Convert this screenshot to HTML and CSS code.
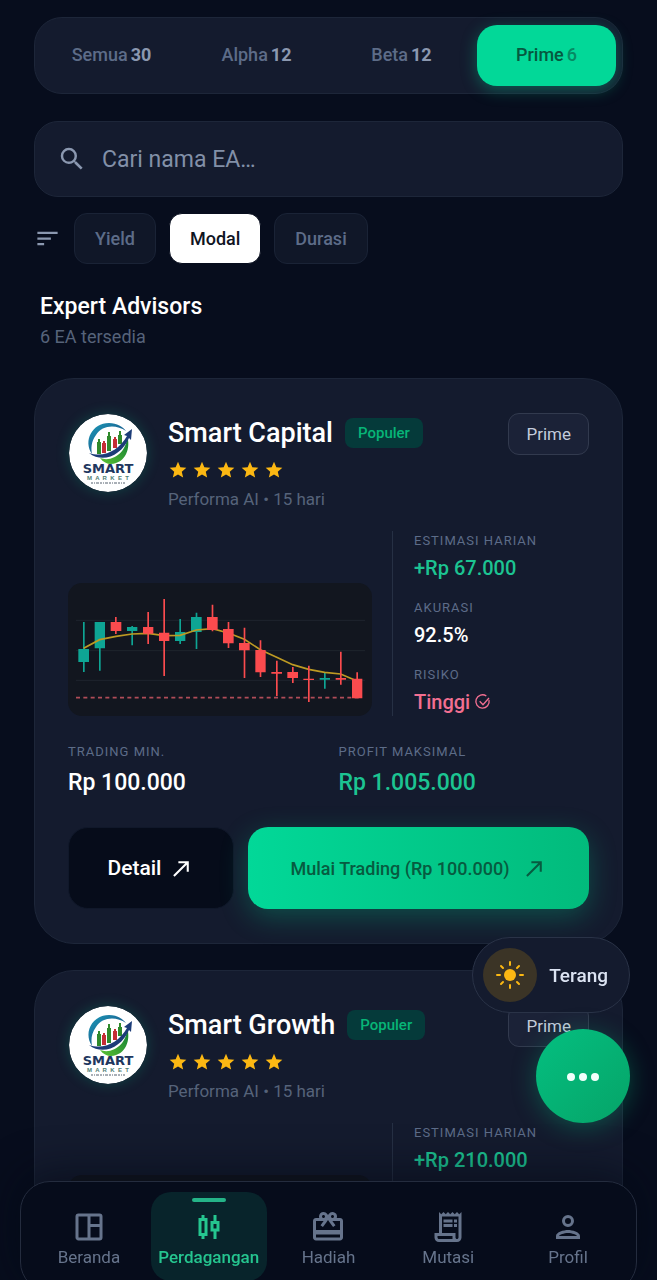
FILE: index.html
```html
<!DOCTYPE html>
<html lang="id">
<head>
  <meta charset="UTF-8">
  <meta name="viewport" content="width=device-width, initial-scale=1.0">
  <title>Expert Advisors</title>
  <link rel="stylesheet" href="styles.css">
</head>
<body>
  <!-- Shared drawings -->
  <svg class="defs" aria-hidden="true">
    <defs>
      <linearGradient id="ringBlue" x1="0" y1="0" x2="1" y2="1">
        <stop offset="0" stop-color="#1b9bb8"/>
        <stop offset="1" stop-color="#1c3c78"/>
      </linearGradient>
      <linearGradient id="ringGreen" x1="0" y1="1" x2="1" y2="0">
        <stop offset="0" stop-color="#5cc233"/>
        <stop offset="1" stop-color="#0d7a34"/>
      </linearGradient>
    </defs>
    <symbol id="star" viewBox="0 0 24 24">
      <path d="M12 17.27 18.18 21l-1.64-7.03L22 9.24l-7.19-.61L12 2 9.19 8.63 2 9.24l5.46 4.73L5.82 21z"/>
    </symbol>
    <symbol id="arrow" viewBox="0 0 24 24">
      <path d="M9 5v2h6.59L4 18.59 5.41 20 17 8.41V15h2V5H9z"/>
    </symbol>
  </svg>

  <main class="content">
    <div class="tabs">
      <button class="tab">Semua <b>30</b></button>
      <button class="tab">Alpha <b>12</b></button>
      <button class="tab">Beta <b>12</b></button>
      <button class="tab active">Prime <b>6</b></button>
    </div>

    <label class="search">
      <svg viewBox="0 0 24 24" aria-hidden="true"><path d="M15.500 14h-.79l-.28-.27A6.470 6.470 0 0 0 16 9.500 6.500 6.500 0 1 0 9.500 16c1.610 0 3.090-.59 4.230-1.570l.27.28v.79l5 4.990L20.490 19l-4.990-5zm-6 0C7.010 14 5 11.990 5 9.500S7.010 5 9.500 5 14 7.010 14 9.500 11.990 14 9.500 14z"/></svg>
      <input type="search" placeholder="Cari nama EA…" aria-label="Cari nama EA">
    </label>

    <div class="filters">
      <svg viewBox="0 0 24 24" aria-hidden="true"><path d="M3 18h6v-2H3v2zM3 6v2h18V6H3zm0 7h12v-2H3v2z"/></svg>
      <button class="chip">Yield</button>
      <button class="chip active">Modal</button>
      <button class="chip">Durasi</button>
    </div>

    <header class="heading">
      <h1>Expert Advisors</h1>
      <p>6 EA tersedia</p>
    </header>

    <article class="card">
      <div class="card-head">
        <svg class="logo" viewBox="0 0 78 78">
          <g id="logo">
            <circle cx="39" cy="39" r="39" fill="#fff"/>
            <path d="M23 40C14 27 23 9 40 9c8 0 14 4 17 8-10-7-24-6-30 4-5 7-5 13-4 19z" fill="url(#ringBlue)"/>
            <path d="M31 44c13 5 28-7 27-23 4 13-1 28-16 29-4 0-8-2-11-6z" fill="url(#ringGreen)"/>
            <g fill="#2f8a2b">
              <path d="M28 28h4v12h-4z M38 22h4v15h-4z M49 21h4v9h-4z"/>
              <path d="M29 25h2v3h-2z M39 18h2v4h-2z M50 17h2v4h-2z"/>
            </g>
            <g fill="#c52d35">
              <path d="M33 29h4v10h-4z M44 25h4v9h-4z M34 27h2v2h-2z M45 23h2v2h-2z"/>
            </g>
            <path d="M20 39c16 5 30-3 38-17l-3-1 8-6-1 11-2-2C53 41 34 50 20 39z" fill="#1c3c78"/>
            <text x="39" y="59" text-anchor="middle" class="logo-name">SMART</text>
            <text x="39" y="66" text-anchor="middle" class="logo-sub">M  A  R  K  E  T</text>
            <path d="M22 69h34" stroke="#54616f" stroke-width="1" stroke-dasharray="2 1 1 1 3 1"/>
          </g>
        </svg>
        <div class="card-title">
          <div class="name-row">
            <h2>Smart Capital</h2>
            <span class="popular">Populer</span>
          </div>
          <div class="stars">
            <svg><use href="#star"/></svg><svg><use href="#star"/></svg><svg><use href="#star"/></svg><svg><use href="#star"/></svg><svg><use href="#star"/></svg>
          </div>
          <p class="perf">Performa AI • 15 hari</p>
        </div>
        <span class="tier">Prime</span>
      </div>
      <div class="card-body">
        <svg class="chart" viewBox="24 21 912 399">
          <path d="M48 133H915M48 224H915M48 313H915" stroke="#1f252e" stroke-width="3"/>
          <path d="M48 365H906" stroke="#b04c58" stroke-width="5" stroke-dasharray="12 10"/>
          <g fill="#0ea594">
            <path d="M69 138h5v150h-5z M55 219h32v39H55z"/>
            <path d="M117 138h5v146h-5z M104 138h31v79h-31z"/>
            <path d="M214 150h5v58h-5z M201 153h31v12h-31z"/>
            <path d="M358 129h5v75h-5z M345 168h31v27h-31z"/>
            <path d="M407 110h5v109h-5z M393 123h32v45h-32z"/>
            <path d="M792 289h5v49h-5z M779 306h31v5h-31z"/>
          </g>
          <path d="M71 217 119 191 168 181 216 174 264 172 312 179 360 178 409 162 457 158 505 171 553 190 601 221 650 244 698 266 746 280 794 289 842 294 891 315" fill="none" stroke="#bd9a23" stroke-width="5"/>
          <g fill="#fb4b4e">
            <path d="M165 123h5v51h-5z M152 138h32v27h-32z"/>
            <path d="M262 108h5v96h-5z M249 153h31v20h-31z"/>
            <path d="M310 69h5v231h-5z M297 170h31v25h-31z"/>
            <path d="M455 86h5v80h-5z M441 123h32v39h-32z"/>
            <path d="M503 138h5v78h-5z M489 159h32v43h-32z"/>
            <path d="M551 155h5v151h-5z M537 201h32v22h-32z"/>
            <path d="M599 193h5v110h-5z M586 222h31v67h-31z"/>
            <path d="M648 254h5v106h-5z M634 288h32v5h-32z"/>
            <path d="M696 273h5v48h-5z M682 288h32v18h-32z"/>
            <path d="M744 269h5v109h-5z M730 308h32v4h-32z"/>
            <path d="M840 227h5v99h-5z M827 306h31v5h-31z"/>
            <path d="M889 289h5v78h-5z M876 308h31v59h-31z"/>
          </g>
        </svg>
        <dl class="stats">
          <div><dt>ESTIMASI HARIAN</dt><dd class="green">+Rp 67.000</dd></div>
          <div><dt>AKURASI</dt><dd>92.5%</dd></div>
          <div>
            <dt>RISIKO</dt>
            <dd class="pink">Tinggi
              <svg viewBox="0 0 24 24"><path d="M21 9A10 10 0 1 1 17 3M7 11l5 5L21 6"/></svg>
            </dd>
          </div>
        </dl>
      </div>
      <dl class="totals">
        <div><dt>TRADING MIN.</dt><dd>Rp 100.000</dd></div>
        <div><dt>PROFIT MAKSIMAL</dt><dd class="green">Rp 1.005.000</dd></div>
      </dl>
      <div class="actions">
        <button class="detail">Detail <svg><use href="#arrow"/></svg></button>
        <button class="start">Mulai Trading (Rp 100.000) <svg><use href="#arrow"/></svg></button>
      </div>
    </article>

    <article class="card">
      <div class="card-head">
        <svg class="logo" viewBox="0 0 78 78"><use href="#logo"/></svg>
        <div class="card-title">
          <div class="name-row">
            <h2>Smart Growth</h2>
            <span class="popular">Populer</span>
          </div>
          <div class="stars">
            <svg><use href="#star"/></svg><svg><use href="#star"/></svg><svg><use href="#star"/></svg><svg><use href="#star"/></svg><svg><use href="#star"/></svg>
          </div>
          <p class="perf">Performa AI • 15 hari</p>
        </div>
        <span class="tier">Prime</span>
      </div>
      <div class="card-body">
        <svg class="chart" viewBox="24 21 912 399"></svg>
        <dl class="stats">
          <div><dt>ESTIMASI HARIAN</dt><dd class="green">+Rp 210.000</dd></div>
        </dl>
      </div>
    </article>
  </main>

  <div class="floating">
    <button class="theme">
      <span class="sun">
        <svg viewBox="0 0 28 28"><circle cx="14" cy="14" r="6"/><path d="M14 1v3M14 24v3M1 14h3M24 14h3M5 5l2 2M21 21l2 2M5 23l2-2M21 7l2-2" stroke="currentColor" stroke-width="2" stroke-linecap="round"/></svg>
      </span>
      Terang
    </button>
    <button class="more" aria-label="Menu">
      <svg viewBox="0 0 32 8"><circle cx="4" cy="4" r="4"/><circle cx="16" cy="4" r="4"/><circle cx="28" cy="4" r="4"/></svg>
    </button>
  </div>

  <nav class="nav">
    <a href="#beranda">
      <svg viewBox="0 0 24 24"><path d="M19 3H5a2 2 0 0 0-2 2v14c0 1.100.9 2 2 2h14a2 2 0 0 0 2-2V5a2 2 0 0 0-2-2zM5 19V5h6v14H5zm14 0h-6v-7h6v7zm0-9h-6V5h6v5z"/></svg>
      Beranda
    </a>
    <a href="#perdagangan" class="active">
      <svg viewBox="0 0 24 24"><path d="M9 4H7v2H5v12h2v2h2v-2h2V6H9V4zm0 12H7V8h2v8zM19 8h-2V4h-2v4h-2v7h2v5h2v-5h2V8zm-2 5h-2v-3h2v3z"/></svg>
      Perdagangan
    </a>
    <a href="#hadiah">
      <svg viewBox="0 0 24 24"><path d="M20 6h-2.180c.11-.31.18-.65.18-1a2.996 2.996 0 0 0-5.500-1.650l-.5.67-.5-.68C10.960 2.540 10.050 2 9 2 7.340 2 6 3.340 6 5c0 .35.07.69.18 1H4c-1.110 0-1.990.89-1.990 2L2 19c0 1.110.89 2 2 2h16c1.110 0 2-.89 2-2V8c0-1.110-.89-2-2-2zm-5-2c.55 0 1 .45 1 1s-.45 1-1 1-1-.45-1-1 .45-1 1-1zM9 4c.55 0 1 .45 1 1s-.45 1-1 1-1-.45-1-1 .45-1 1-1zm11 15H4v-2h16v2zm0-5H4V8h5.080L7 10.830 8.620 12 11 8.760l1-1.360 1 1.360L15.380 12 17 10.830 14.920 8H20v6z"/></svg>
      Hadiah
    </a>
    <a href="#mutasi">
      <svg viewBox="0 0 24 24"><path d="M19.500 3.500 18 2l-1.500 1.500L15 2l-1.500 1.500L12 2l-1.500 1.500L9 2 7.500 3.500 6 2v14H3v3c0 1.660 1.340 3 3 3h12c1.660 0 3-1.340 3-3V2l-1.500 1.500zM15 20H6c-.55 0-1-.45-1-1v-1h10v2zm4-1c0 .55-.45 1-1 1s-1-.45-1-1v-3H8V5h11v14zM9 7h6v2H9zM16 7h2v2h-2zM9 10h6v2H9zM16 10h2v2h-2z"/></svg>
      Mutasi
    </a>
    <a href="#profil">
      <svg viewBox="0 0 24 24"><path d="M12 6a2 2 0 1 1 0 4 2 2 0 0 1 0-4m0 10c2.700 0 5.800 1.290 6 2H6c.23-.72 3.310-2 6-2m0-12a4 4 0 1 0 0 8 4 4 0 0 0 0-8zm0 10c-2.670 0-8 1.340-8 4v2h16v-2c0-2.660-5.330-4-8-4z"/></svg>
      Profil
    </a>
  </nav>
</body>
</html>
```
FILE: styles.css
```css
* {
  box-sizing: border-box;
}

body {
  margin: 0;
  height: 100vh;
  overflow: hidden;
  background: #070d1d;
  color: #fff;
  font-family: Roboto, sans-serif;
}

h1, h2, p, dl, dd {
  margin: 0;
}

button, input {
  font-family: inherit;
  border: none;
}

button {
  cursor: pointer;
}

svg {
  fill: currentColor;
  flex-shrink: 0;
}

.defs {
  position: absolute;
  width: 0;
  height: 0;
}

.content {
  height: 100%;
  padding: 17px 34px 0;
  overflow-y: auto;
  scrollbar-width: none;
}

/* Tabs */
.tabs {
  display: grid;
  grid-template-columns: repeat(4, 1fr);
  gap: 6px;
  padding: 7px 6px 7px 7px;
  background: #141b2e;
  border: 1px solid #1d2639;
  border-radius: 28px;
}

.tab {
  display: flex;
  align-items: center;
  justify-content: center;
  gap: 3px;
  height: 61px;
  padding: 0 0 2px;
  background: none;
  border-radius: 20px;
  color: #5d6c88;
  font-size: 18px;
  font-weight: 500;
}

.tab b {
  color: #8b98b0;
  font-weight: 700;
}

.tab.active {
  background: #02d898;
  color: #06583f;
  box-shadow: 0 4px 16px rgba(2, 216, 152, 0.35);
}

.tab.active b {
  color: #068a63;
  font-weight: 500;
}

/* Search */
.search {
  display: flex;
  align-items: center;
  gap: 15px;
  height: 76px;
  margin-top: 27px;
  padding: 0 22px;
  background: #141b2e;
  border: 1px solid #1d2639;
  border-radius: 24px;
  color: #8b98b0;
}

.search svg {
  width: 30px;
  height: 30px;
}

.search input {
  flex: 1;
  min-width: 0;
  padding: 0;
  background: none;
  color: #fff;
  font-size: 23px;
  outline: none;
}

.search input::placeholder {
  color: #8290a8;
}

/* Filters */
.filters {
  display: flex;
  align-items: center;
  gap: 13px;
  margin-top: 16px;
  color: #8b98b0;
}

.filters svg {
  width: 27px;
  height: 27px;
}

.chip {
  height: 51px;
  padding: 0 20px;
  background: #101728;
  border: 1px solid #1a2336;
  border-radius: 13px;
  color: #5d6c88;
  font-size: 18px;
  font-weight: 500;
}

.chip.active {
  background: #fff;
  border-color: #070d1d;
  color: #10141f;
}

/* Heading */
.heading {
  padding: 28px 6px 0;
}

.heading h1 {
  font-size: 23px;
  font-weight: 500;
  line-height: 30px;
}

.heading p {
  color: #56637a;
  font-size: 18px;
  line-height: 30px;
}

/* Cards */
.card {
  margin-top: 26px;
  padding: 34px 33px;
  background: #141b2e;
  border: 1px solid #1d2639;
  border-radius: 40px;
}

.card-head {
  display: flex;
  align-items: flex-start;
}

.logo {
  width: 78px;
  height: 78px;
  margin: 1px 21px 0 1px;
  border-radius: 50%;
  box-shadow: 0 0 14px rgba(2, 216, 152, 0.22);
}

.logo-name {
  fill: #20365e;
  font: bold 13px "DejaVu Sans", sans-serif;
}

.logo-sub {
  fill: #4f7d74;
  font: bold 6px "Liberation Sans", sans-serif;
  white-space: pre;
}

.card-title {
  flex: 1;
}

.name-row {
  display: flex;
  align-items: center;
  gap: 12px;
  height: 40px;
}

.name-row h2 {
  font-size: 27px;
  font-weight: 500;
}

.popular {
  padding: 0 13px;
  background: #053a3a;
  border-radius: 8px;
  color: #07b577;
  font-size: 15px;
  font-weight: 500;
  line-height: 30px;
}

.stars {
  display: flex;
  gap: 4px;
  height: 33px;
  align-items: center;
  color: #fcb813;
}

.stars svg {
  width: 20px;
  height: 20px;
}

.perf {
  color: #56637a;
  font-size: 17px;
  line-height: 26px;
}

.tier {
  padding: 0 17px;
  background: #1b2237;
  border: 1px solid #323a4e;
  border-radius: 11px;
  color: #c3cbdb;
  font-size: 17px;
  line-height: 40px;
}

.card-body {
  display: grid;
  grid-template-columns: 1fr 197px;
  gap: 20px;
  align-items: end;
  margin-top: 19px;
}

.chart {
  width: 100%;
  background: #12161f;
  border-radius: 14px;
}

.stats {
  display: grid;
  gap: 13px;
  height: 185px;
  align-content: start;
  padding-left: 21px;
  border-left: 1px solid #263044;
}

dt {
  color: #5d6c88;
  font-size: 13px;
  font-weight: 400;
  letter-spacing: 1px;
  line-height: 20px;
}

.stats dd {
  display: flex;
  align-items: center;
  gap: 5px;
  font-size: 20px;
  font-weight: 500;
  line-height: 34px;
}

.stats dd svg {
  width: 16px;
  height: 16px;
  overflow: visible;
  fill: none;
  stroke: currentColor;
  stroke-width: 2px;
}

.totals {
  display: grid;
  grid-template-columns: 1fr 1fr;
  gap: 20px;
  margin-top: 26px;
}

.totals dd {
  font-size: 23px;
  font-weight: 500;
  line-height: 42px;
}

.green {
  color: #1cc492;
}

.stats .pink {
  color: #f26f91;
}

.actions {
  display: grid;
  grid-template-columns: 166px 1fr;
  gap: 14px;
  margin-top: 23px;
}

.actions button {
  display: flex;
  align-items: center;
  justify-content: center;
  height: 82px;
  padding: 0;
  border-radius: 20px;
  font-weight: 500;
}

.actions .detail {
  gap: 8px;
  background: #060c1a;
  border: 1px solid #10182a;
  color: #fff;
  font-size: 21px;
}

.actions .start {
  gap: 12px;
  background: linear-gradient(90deg, #02d898, #02bb7c);
  box-shadow: 0 8px 28px rgba(2, 200, 140, 0.3);
  color: #075b40;
  font-size: 18px;
}

.actions svg {
  width: 25px;
  height: 25px;
}

/* Floating buttons */
.floating {
  position: fixed;
  right: 27px;
  bottom: 157px;
  display: flex;
  flex-direction: column;
  align-items: flex-end;
  gap: 16px;
}

.theme {
  display: flex;
  align-items: center;
  gap: 12px;
  height: 76px;
  padding: 0 21px 0 10px;
  background: #141b2e;
  border: 1px solid #2a3347;
  border-radius: 38px;
  color: #dbe3f2;
  font-size: 19px;
  font-weight: 500;
}

.sun {
  display: flex;
  align-items: center;
  justify-content: center;
  width: 54px;
  height: 54px;
  background: #3b3426;
  border-radius: 50%;
  color: #fcb813;
}

.sun svg {
  width: 28px;
  height: 28px;
}

.more {
  width: 94px;
  height: 94px;
  padding: 0;
  background: linear-gradient(135deg, #04bf80, #06a468);
  border-radius: 50%;
  box-shadow: 0 4px 24px rgba(4, 180, 120, 0.35);
  color: #f3fffb;
}

.more svg {
  width: 32px;
  height: 8px;
}

/* Bottom navigation */
.nav {
  position: fixed;
  left: 20px;
  right: 20px;
  bottom: -12px;
  display: grid;
  grid-template-columns: repeat(5, 1fr);
  gap: 4px;
  padding: 10px;
  background: #060c1b;
  border: 1px solid #242c3e;
  border-radius: 30px;
  box-shadow: 0 -8px 40px rgba(4, 8, 20, 0.6);
}

.nav a {
  position: relative;
  display: flex;
  flex-direction: column;
  align-items: center;
  height: 89px;
  padding-top: 17px;
  border-radius: 20px;
  color: #66748c;
  font-size: 17px;
  line-height: 24px;
  text-decoration: none;
}

.nav svg {
  width: 36px;
  height: 36px;
}

.nav a.active {
  background: #08242b;
  color: #25c58f;
  font-weight: 500;
}

.nav a.active::before {
  content: "";
  position: absolute;
  top: 6px;
  width: 34px;
  height: 4px;
  background: #25b488;
  border-radius: 2px;
}
```
